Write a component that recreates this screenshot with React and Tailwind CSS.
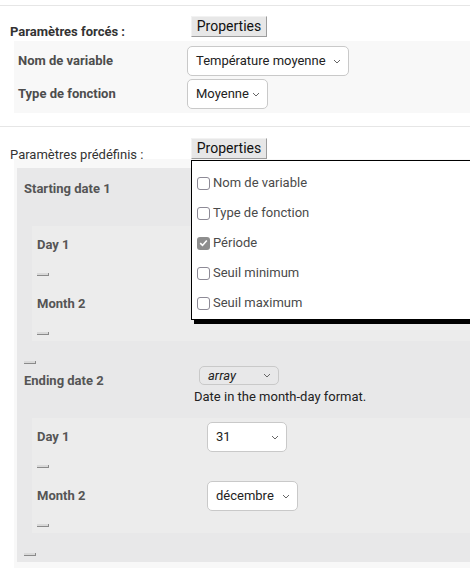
import React from "react";

const Chevron = () => (
  <svg width="8" height="5" viewBox="0 0 8 5" className="shrink-0">
    <path d="M1 1l3 3 3-3" stroke="#666" strokeWidth="1" fill="none" />
  </svg>
);

const Select = ({ text, w, h = "h-[30px]", italic = false, bg = "bg-white", extra = "" }) => (
  <div
    className={`flex items-center justify-between ${h} ${bg} border border-[#c9c9c9] rounded-[5px] pl-[8px] pr-[7px] text-[13px] text-[#222] ${extra}`}
    style={{ width: w }}
  >
    <span className={italic ? "italic" : ""}>{text}</span>
    <Chevron />
  </div>
);

const Btn = () => (
  <div className="h-[21px] w-[76px] flex items-center justify-center bg-[#e7e7e7] border border-t-[#f2f2f2] border-l-[#f2f2f2] border-r-[#9c9c9c] border-b-[#9c9c9c] text-[14px] text-[#111]">
    Properties
  </div>
);

const Tiny = () => (
  <div className="w-[12px] h-[3px] bg-[#d9d9d9] border-b border-r border-[#8a8a8a]" />
);

const Check = ({ checked }) =>
  checked ? (
    <div className="w-[13px] h-[13px] rounded-[3px] bg-[#8e8e8e] flex items-center justify-center">
      <svg width="9" height="8" viewBox="0 0 9 8">
        <path d="M1.2 4.2l2.3 2.2L7.8 1.4" stroke="#fff" strokeWidth="1.6" fill="none" />
      </svg>
    </div>
  ) : (
    <div className="w-[13px] h-[13px] rounded-[3px] border border-[#8d8a96] bg-white" />
  );

const NestedRow = ({ label, select }) => (
  <div className="flex items-center h-[30px]">
    <div className="w-[175px] pl-[5px] text-[13px] font-bold text-[#555]">{label}</div>
    {select}
  </div>
);

const Nested = ({ day, month }) => (
  <div className="ml-[15px] bg-[#ececec] pt-[4px]">
    <NestedRow label="Day 1" select={day} />
    <div className="h-[29px] pl-[5px] pt-[13px]">
      <Tiny />
    </div>
    <NestedRow label="Month 2" select={month} />
    <div className="h-[22px] pl-[5px] pt-[13px]">
      <Tiny />
    </div>
  </div>
);

const DateBlock = ({ label, day, month, hidden = false }) => (
  <div>
    <div className="flex h-[52px]">
      <div className="w-[177px] pl-[7px] pt-[7px] text-[13px] leading-[15px] font-bold text-[#555]">{label}</div>
      {hidden ? null : (
        <div className="flex flex-col">
          <Select text="array" w={80} h="h-[19px]" italic bg="bg-transparent" extra="ml-[5px] rounded-[4px] pl-[5px]" />
          <div className="mt-[4px] text-[13px] leading-[15px] text-[#222]">Date in the month-day format.</div>
        </div>
      )}
    </div>
    <Nested day={day} month={month} />
  </div>
);

const items = [
  { t: "Nom de variable", c: false },
  { t: "Type de fonction", c: false },
  { t: "Période", c: true },
  { t: "Seuil minimum", c: false },
  { t: "Seuil maximum", c: false },
];

export default function App() {
  return (
    <div className="w-[470px] h-[576px] overflow-hidden bg-white font-['Roboto',sans-serif] text-[#222]">
      <div className="h-[5px]" />
      <div className="h-px bg-[#e6e6e6]" />

      <div className="flex h-[35px]">
        <div className="w-[191px] pl-[10px] pt-[18px] text-[13px] leading-[15px] font-bold text-[#333]">
          Paramètres forcés :
        </div>
        <div className="pt-[10px]">
          <Btn />
        </div>
      </div>
      <div className="ml-[14px] bg-[#f8f8f8] pt-[5px] pb-[4px] flex flex-col gap-[3px]">
        <div className="flex items-center">
          <div className="w-[173px] pl-[4px] text-[13px] font-bold text-[#4d4d4d]">Nom de variable</div>
          <Select text="Température moyenne" w={162} />
        </div>
        <div className="flex items-center">
          <div className="w-[173px] pl-[4px] text-[13px] font-bold text-[#4d4d4d]">Type de fonction</div>
          <Select text="Moyenne" w={81} />
        </div>
      </div>

      <div className="h-[13px]" />
      <div className="h-px bg-[#e6e6e6]" />

      <div className="flex h-[32px]">
        <div className="w-[191px] pl-[10px] pt-[20px] text-[13px] leading-[15px] text-[#333]">
          Paramètres prédéfinis :
        </div>
        <div className="relative pt-[11px] self-start z-10">
          <Btn />
          <div className="absolute left-0 top-full mt-[1px] w-[300px] bg-white border border-black shadow-[3px_4px_0_0_#000] pt-[7px] pb-[1px]">
            {items.map((it) => (
              <div key={it.t} className="h-[30px] flex items-center pl-[5px] gap-[3px] text-[13px] text-[#4a4a4a]">
                <Check checked={it.c} />
                <span>{it.t}</span>
              </div>
            ))}
          </div>
        </div>
      </div>

      <div className="ml-[14px] bg-[#f8f8f8] pt-[9px] pb-[6px] pl-[3px]">
        <div className="bg-[#e8e8e9] pt-[6px] pb-[6px]">
          <DateBlock label="Starting date 1" hidden day={null} month={null} />
          <div className="pt-[20px] pl-[7px] mb-[2px]">
            <Tiny />
          </div>
          <DateBlock
            label="Ending date 2"
            day={<Select text="31" w={80} />}
            month={<Select text="décembre" w={91} />}
          />
          <div className="pt-[20px] pl-[7px]">
            <Tiny />
          </div>
        </div>
      </div>
    </div>
  );
}
